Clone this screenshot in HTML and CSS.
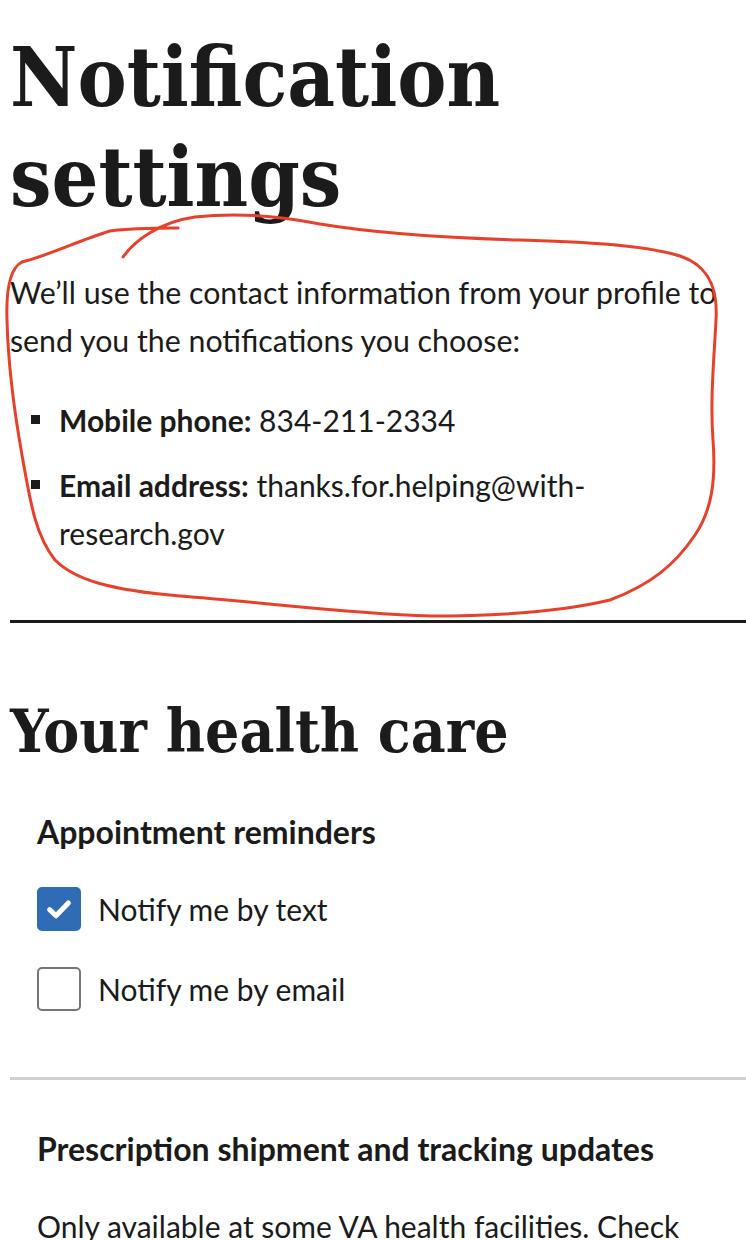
FILE: index.html
```html
<!DOCTYPE html>
<html lang="en">
<head>
<meta charset="utf-8">
<title>Notification settings</title>
<link rel="stylesheet" href="styles.css">
</head>
<body>
<main class="page">
  <h1 class="title">Notification settings</h1>
  <p class="intro">We’ll use the contact information from your profile to send you the notifications you choose:</p>
  <ul class="contact-list">
    <li><strong>Mobile phone:</strong> 834-211-2334</li>
    <li><strong>Email address:</strong> thanks.for.helping@with-research.gov</li>
  </ul>
  <hr class="rule-dark">
  <section class="group">
    <h2 class="group-title">Your health care</h2>
    <div class="pref" role="group" aria-labelledby="appt">
      <h3 class="pref-title" id="appt">Appointment reminders</h3>
      <label class="check">
        <span class="box box-checked"><svg viewBox="0 0 24 24" width="30" height="30" aria-hidden="true"><path d="M4.5 12.5 L9.6 17.4 L19.5 7.2" fill="none" stroke="#fff" stroke-width="4" stroke-linecap="round" stroke-linejoin="round"/></svg></span>
        <span class="check-text">Notify me by text</span>
      </label>
      <label class="check check-second">
        <span class="box"></span>
        <span class="check-text">Notify me by email</span>
      </label>
    </div>
    <hr class="rule-light">
    <div class="pref pref-second">
      <h3 class="pref-title">Prescription shipment and tracking updates</h3>
      <p class="pref-desc">Only available at some VA health facilities. Check with your VA pharmacy first.</p>
    </div>
  </section>
  <svg class="annotation" viewBox="0 0 746 1240" width="746" height="1240" aria-hidden="true">
    <path d="M 123 257
      C 135 240, 160 222, 195 217
      C 240 212, 280 216, 320 224
      C 380 234, 450 238, 520 240
      C 580 242, 640 244, 680 256
      C 710 266, 718 290, 716 320
      C 714 360, 710 400, 713 440
      C 716 480, 712 510, 695 535
      C 675 565, 650 585, 610 600
      C 560 612, 500 616, 430 616
      C 350 614, 260 602, 180 596
      C 110 590, 75 580, 55 560
      C 35 535, 30 500, 22 455
      C 14 410, 8 360, 7 320
      C 6 290, 10 268, 22 262
      C 50 255, 80 240, 110 231
      C 130 228, 160 228, 178 228" fill="none" stroke="#e8402a" stroke-width="3" stroke-linecap="round" stroke-linejoin="round"/>
  </svg>
</main>
</body>
</html>
```
FILE: styles.css
```css
html, body {
  margin: 0;
  padding: 0;
  background: #ffffff;
}

body {
  font-family: Lato, "Liberation Sans", sans-serif;
  color: #1b1b1b;
  overflow: hidden;
}

.page {
  position: relative;
  padding: 27px 0 0 10px;
  min-height: 1240px;
  box-sizing: border-box;
}

.title {
  margin: 0;
  font-family: "DejaVu Serif Condensed", "DejaVu Serif", serif;
  font-weight: 700;
  font-size: 82px;
  line-height: 100px;
  color: #1b1b1b;
}

.intro {
  margin: 41px 10px 0 0;
  font-size: 30.3px;
  line-height: 48px;
}

.contact-list {
  list-style: none;
  margin: 32px 0 0;
  padding: 0 0 0 49px;
  font-size: 30px;
  line-height: 48px;
}

.contact-list li {
  position: relative;
}

.contact-list li + li {
  margin-top: 17px;
}

.contact-list li::before {
  content: "";
  position: absolute;
  left: -28px;
  top: 19px;
  width: 9px;
  height: 9px;
  background: #1b1b1b;
}

.contact-list strong {
  font-weight: 700;
}

.rule-dark {
  border: 0;
  height: 3px;
  background: #1b1b1b;
  margin: 63px 0 0;
}

.group-title {
  margin: 71px 0 0;
  font-family: "DejaVu Serif Condensed", "DejaVu Serif", serif;
  font-weight: 700;
  font-size: 60px;
  line-height: 74px;
}

.pref {
  margin-left: 27px;
}

.pref-title {
  margin: 44px 0 0;
  font-size: 32px;
  line-height: 40px;
  font-weight: 700;
}

.check {
  display: flex;
  align-items: center;
  gap: 17px;
  margin-top: 33px;
  font-size: 30px;
  line-height: 48px;
}

.check-second {
  margin-top: 32px;
}

.box {
  width: 44px;
  height: 44px;
  box-sizing: border-box;
  border: 2px solid #757575;
  border-radius: 5px;
  background: #fff;
  display: flex;
  align-items: center;
  justify-content: center;
  flex: none;
}

.box-checked {
  background: #2f6cb5;
  border-color: #2f6cb5;
}

.rule-light {
  border: 0;
  height: 3px;
  background: #d0d0d0;
  margin: 64px 0 0;
}

.pref-second .pref-title {
  margin-top: 49px;
}

.pref-desc {
  margin: 33px 10px 0 0;
  font-size: 30px;
  line-height: 48px;
}

.annotation {
  position: absolute;
  left: 0;
  top: 0;
  pointer-events: none;
}
```
